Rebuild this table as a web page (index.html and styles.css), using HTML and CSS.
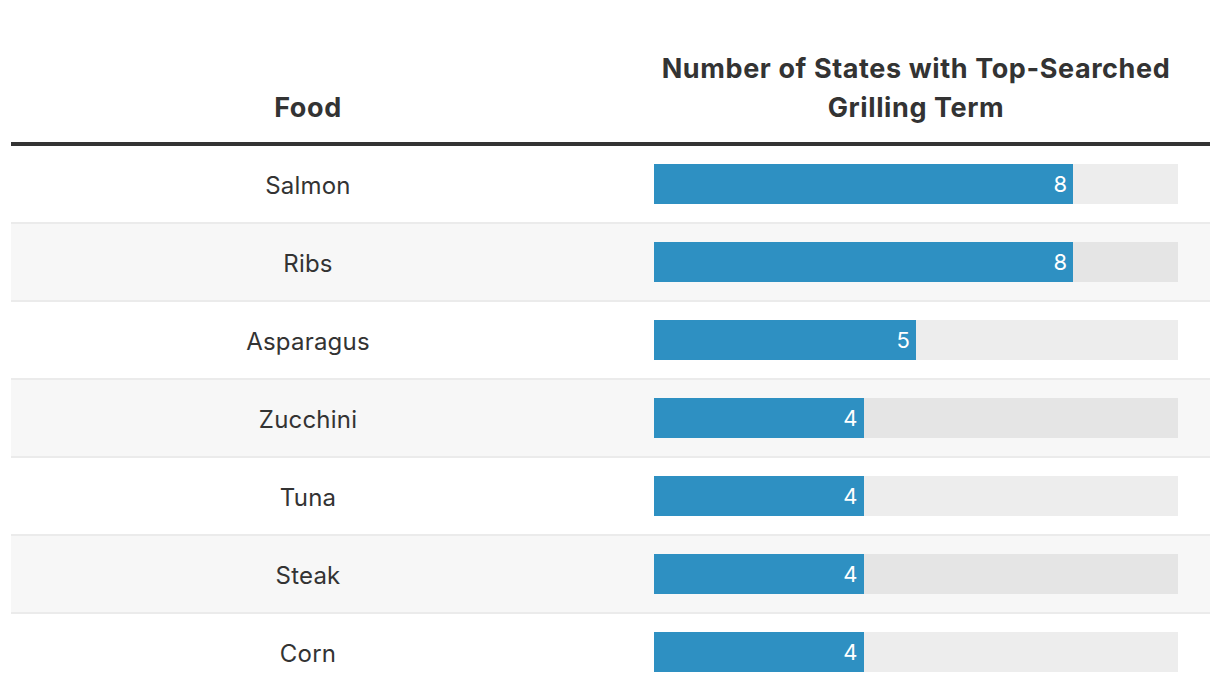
FILE: index.html
```html
<!DOCTYPE html>
<html>
<head>
<meta charset="utf-8">
<link rel="stylesheet" href="styles.css">
</head>
<body>
<div class="table">
  <div class="head">
    <div class="hcell food">Food</div>
    <div class="hcell metric">Number of States with Top-Searched<br>Grilling Term</div>
  </div>
  <div class="row">
    <div class="cell food">Salmon</div>
    <div class="cell barcell"><div class="track"><div class="bar" style="width:80%">8</div></div></div>
  </div>
  <div class="row alt">
    <div class="cell food">Ribs</div>
    <div class="cell barcell"><div class="track"><div class="bar" style="width:80%">8</div></div></div>
  </div>
  <div class="row">
    <div class="cell food">Asparagus</div>
    <div class="cell barcell"><div class="track"><div class="bar" style="width:50%">5</div></div></div>
  </div>
  <div class="row alt">
    <div class="cell food">Zucchini</div>
    <div class="cell barcell"><div class="track"><div class="bar" style="width:40%">4</div></div></div>
  </div>
  <div class="row">
    <div class="cell food">Tuna</div>
    <div class="cell barcell"><div class="track"><div class="bar" style="width:40%">4</div></div></div>
  </div>
  <div class="row alt">
    <div class="cell food">Steak</div>
    <div class="cell barcell"><div class="track"><div class="bar" style="width:40%">4</div></div></div>
  </div>
  <div class="row">
    <div class="cell food">Corn</div>
    <div class="cell barcell"><div class="track"><div class="bar" style="width:40%">4</div></div></div>
  </div>
</div>
</body>
</html>
```
FILE: styles.css
```css
html, body {
  margin: 0;
  padding: 0;
  background: #fff;
}
body {
  font-family: "Inter", "Roboto", sans-serif;
  color: #333;
}
.table {
  margin: 0 10px 0 11px;
  padding-top: 49px;
}
.head {
  display: grid;
  grid-template-columns: 594px 1fr;
  align-items: end;
  border-bottom: 4px solid #333;
  padding-bottom: 15px;
}
.hcell {
  font-weight: 700;
  font-size: 27px;
  line-height: 39px;
  letter-spacing: 0.6px;
  text-align: center;
}
.hcell.metric {
  padding-left: 17px;
}
.row {
  display: grid;
  grid-template-columns: 594px 1fr;
  height: 76px;
  align-items: center;
  border-bottom: 2px solid #ebebeb;
}
.row:last-child {
  border-bottom: none;
}
.row.alt {
  background: #f7f7f7;
}
.cell {
  font-size: 24px;
  letter-spacing: 0.2px;
}
.food {
  text-align: center;
  padding-top: 3px;
}
.barcell {
  padding: 0 32px 0 49px;
}
.track {
  height: 40px;
  background: rgba(0, 0, 0, 0.07);
}
.bar {
  height: 40px;
  background: #2e90c2;
  color: #fff;
  font-size: 22px;
  line-height: 40px;
  text-align: right;
  padding-right: 6px;
  box-sizing: border-box;
}
```
